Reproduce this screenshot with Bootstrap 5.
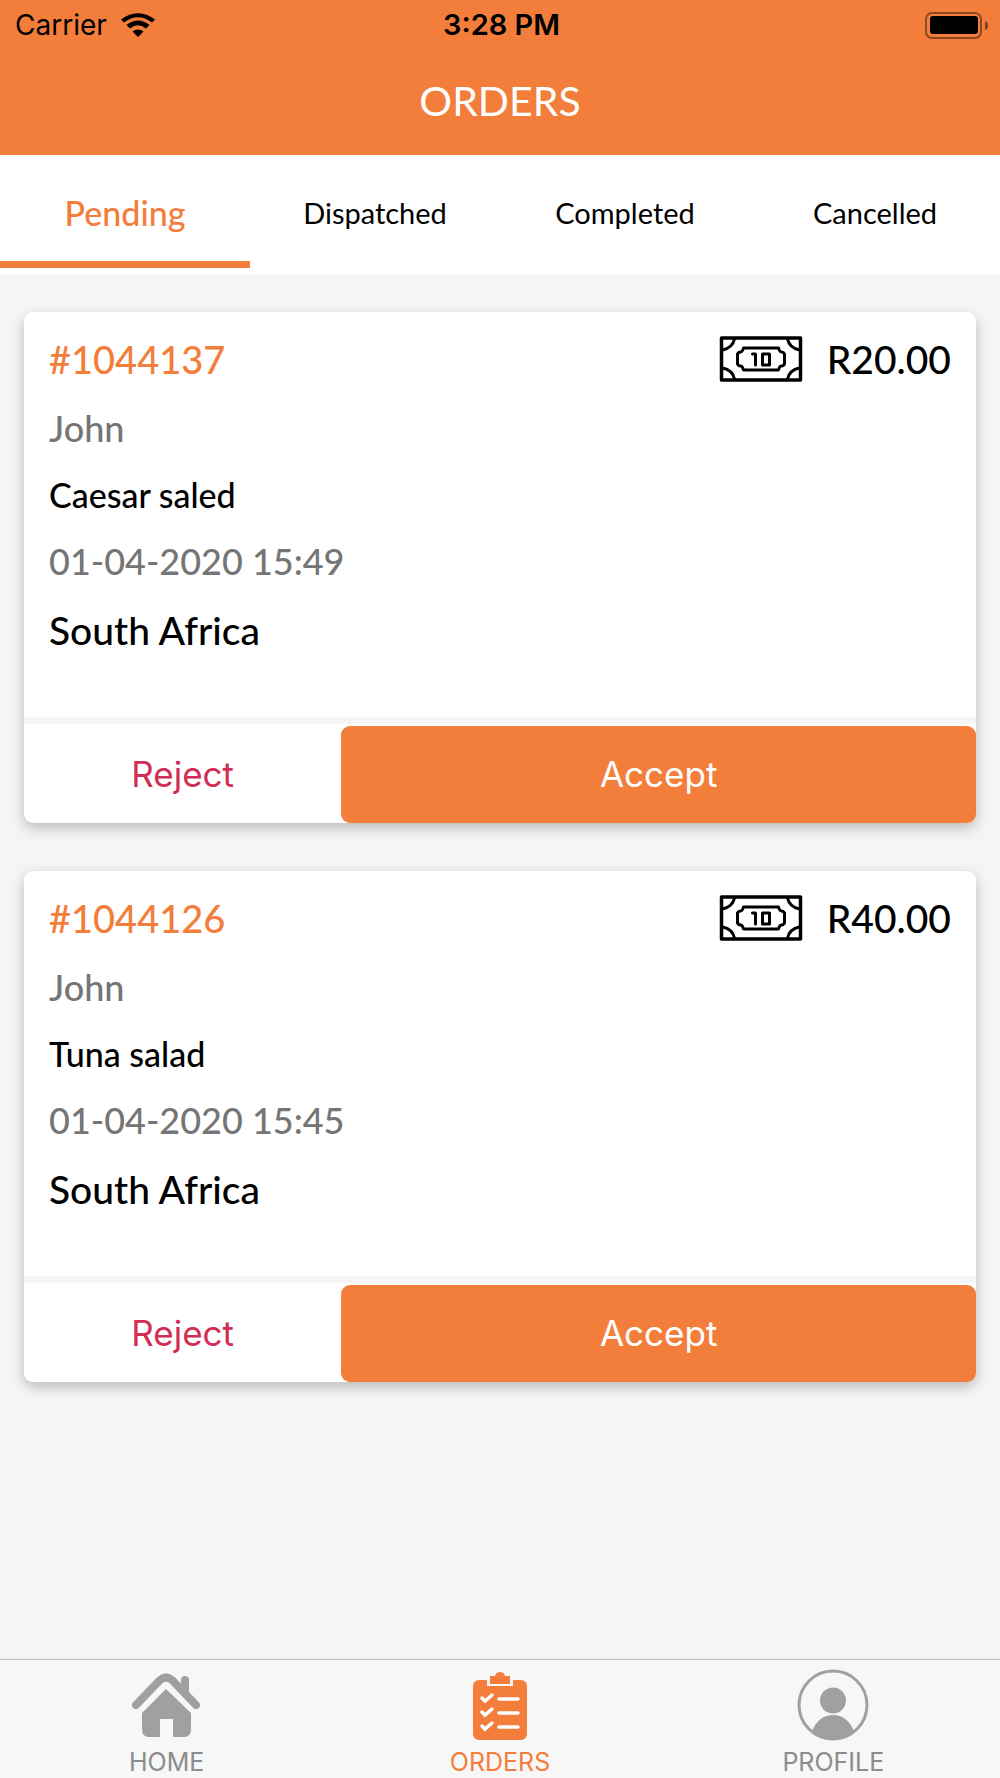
<!DOCTYPE html>
<html lang="en">
<head>
<meta charset="utf-8">
<meta name="viewport" content="width=device-width, initial-scale=1">
<title>Orders</title>
<link href="https://cdn.jsdelivr.net/npm/bootstrap@5.3.0/dist/css/bootstrap.min.css" rel="stylesheet">
<style>
:root { --brand: #f37e3b; --reject: #d12d55; --canvas: #f5f5f5; --muted: #757575; }
body { font-family: Lato, sans-serif; background: var(--canvas); color: #000; line-height: 1.2; }
.app-header { background: var(--brand); height: 155px; }
.status-bar { font-family: Inter, sans-serif; font-size: 28px; line-height: 34px; padding: 8px 12px 0 15px; }
.status-bar > * { flex: 1 1 0; }
.status-carrier { gap: 14px; }
.status-time { font-size: 29px; }
.app-title { font-size: 41px; line-height: 50px; padding-top: 34px; color: #fff; font-weight: 400; }
.status-tabs .nav-link { height: 120px; padding: 0 0 3px; font-size: 29px; color: #000; border-radius: 0; display: flex; align-items: center; justify-content: center; }
.status-tabs .nav-link.active { height: 113px; padding: 10px 0 0; font-size: 34px; font-weight: 500; color: var(--brand); border-bottom: 7px solid var(--brand); }
.order-list { padding: 37px 24px 48px; gap: 48px; }
.order-card { border: 0; border-radius: 9px; box-shadow: 0 5px 14px rgba(0,0,0,.24); color: #000; }
.order-body { padding: 24px 25px 63px; gap: 23px; font-weight: 500; }
.order-top { font-size: 39px; line-height: 47px; }
.order-id { font-size: 38px; font-weight: 500; line-height: 47px; color: var(--brand); }
.order-meta { font-size: 36px; line-height: 45px; color: var(--muted); }
.order-item { font-size: 34px; line-height: 42px; }
.order-place { font-size: 39px; line-height: 47px; }
.order-actions { border-top: 7px solid var(--canvas); padding-top: 2px; }
.order-actions .btn { height: 97px; border: 0; border-radius: 9px; font-family: Inter, sans-serif; font-size: 35px; padding: 0; }
.btn-reject { flex: 1 1 0; color: var(--reject); }
.btn-accept, .btn-accept:hover { flex: 2 1 0; color: #fff; background: var(--brand); }
.tab-bar { background: #f7f7f7; border-top: 1px solid #bdbdbd; height: 119px; font-family: Inter, sans-serif; font-size: 25px; line-height: 30px; font-weight: 400; }
.tab-bar a { color: #8c8c8c; text-decoration: none; padding-top: 9px; }
.tab-bar a.current { color: var(--brand); }
.tab-bar svg { margin-bottom: 6px; }
</style>
</head>
<body class="min-vh-100 d-flex flex-column">
<header class="app-header">
  <div class="status-bar d-flex align-items-center">
    <div class="status-carrier d-flex align-items-center"><span>Carrier</span>
      <svg width="34" height="25" viewBox="0 0 34 25" aria-hidden="true"><path d="M0 6.500Q17-6 34 6.500L31 9.500Q17-1 3 9.500ZM5.500 12Q17 3 28.500 12L25 15.500Q17 9 9 15.500ZM11.500 18.500Q17 14.500 22.500 18.500L17 24Z"/></svg>
    </div>
    <div class="status-time text-center fw-semibold">3:28 PM</div>
    <div class="d-flex justify-content-end">
      <svg width="63" height="27" viewBox="0 0 63 27" aria-hidden="true"><rect x="1" y="1" width="55" height="25" rx="6" fill="none" stroke="#000" stroke-opacity=".42" stroke-width="2"/><rect x="5" y="4" width="48" height="18" rx="3"/><path d="M60 9Q63 10 63 13.500T60 18Z" fill-opacity=".5"/></svg>
    </div>
  </div>
  <h1 class="app-title text-center m-0">ORDERS</h1>
</header>
<nav class="status-tabs nav nav-fill bg-white row g-0" aria-label="Order status">
  <a class="nav-link active col-3" aria-current="page" href="#">Pending</a>
  <a class="nav-link col-3" href="#">Dispatched</a>
  <a class="nav-link col-3" href="#">Completed</a>
  <a class="nav-link col-3" href="#">Cancelled</a>
</nav>
<svg class="d-none" aria-hidden="true">
  <symbol id="banknote" viewBox="0 0 83 46">
    <g fill="none" stroke="#000" stroke-width="3" stroke-linejoin="round" stroke-linecap="round">
      <rect x="2" y="2" width="79" height="42" stroke-width="3.500"/>
      <path d="M15 3Q13 12 3 14M68 3Q70 12 80 14M3 32Q13 34 15 43M80 32Q70 34 68 43"/>
      <path d="M24 12H59Q60 16 62 16Q64 16 65 18V28Q64 30 62 30Q60 30 59 34H24Q23 30 21 30Q19 30 18 28V18Q19 16 21 16Q23 16 24 12Z"/>
      <path d="M33 18H36V29M43 18H50V29H43Z"/>
    </g>
  </symbol>
</svg>
<main class="order-list d-flex flex-column flex-grow-1">
  <article class="order-card card">
    <div class="order-body d-flex flex-column">
      <div class="order-top d-flex justify-content-between">
        <h2 class="order-id m-0">#1044137</h2>
        <div class="d-flex align-items-start"><svg class="me-4" width="84" height="46" role="img" aria-label="Cash"><use href="#banknote"/></svg><span>R20.00</span></div>
      </div>
      <div class="order-meta">John</div>
      <div class="order-item">Caesar saled</div>
      <time class="order-meta" datetime="2020-04-01T15:49">01-04-2020 15:49</time>
      <div class="order-place">South Africa</div>
    </div>
    <div class="order-actions d-flex"><button type="button" class="btn btn-reject">Reject</button><button type="button" class="btn btn-accept">Accept</button></div>
  </article>
  <article class="order-card card">
    <div class="order-body d-flex flex-column">
      <div class="order-top d-flex justify-content-between">
        <h2 class="order-id m-0">#1044126</h2>
        <div class="d-flex align-items-start"><svg class="me-4" width="84" height="46" role="img" aria-label="Cash"><use href="#banknote"/></svg><span>R40.00</span></div>
      </div>
      <div class="order-meta">John</div>
      <div class="order-item">Tuna salad</div>
      <time class="order-meta" datetime="2020-04-01T15:45">01-04-2020 15:45</time>
      <div class="order-place">South Africa</div>
    </div>
    <div class="order-actions d-flex"><button type="button" class="btn btn-reject">Reject</button><button type="button" class="btn btn-accept">Accept</button></div>
  </article>
</main>
<nav class="tab-bar row g-0 sticky-bottom" aria-label="Main">
  <a class="col-4 d-flex flex-column align-items-center" href="#">
    <svg width="72" height="72" viewBox="1 0 72 72" fill="#a0a0a0" aria-hidden="true">
      <path d="M6 36L30 11Q36 6 42 11L66 36" fill="none" stroke="#a0a0a0" stroke-width="8" stroke-linecap="round" stroke-linejoin="round"/>
      <path d="M51 11Q51 7 55 7T59 11V28L51 20Z"/>
      <path d="M36 20L61 44V60Q61 68 54 68H43V50H30V68H19Q12 68 12 60V44Z"/>
    </svg>
    <span>HOME</span>
  </a>
  <a class="col-4 d-flex flex-column align-items-center current" aria-current="page" href="#">
    <svg width="72" height="72" viewBox="0 0 72 72" aria-hidden="true">
      <rect x="9" y="11" width="54" height="60" rx="6" fill="#f37e3b"/>
      <path d="M23 7V17H49V7" fill="#f7f7f7"/>
      <path d="M26 7H31Q32 3 36 3T41 7H46V15H26Z" fill="#f37e3b"/>
      <g fill="none" stroke="#fff" stroke-width="3.500" stroke-linecap="round"><path d="M35 30H54M35 44H54M35 58H54"/><path d="M18 29L21 32L28 26M18 43L21 46L28 40M18 57L21 60L28 54"/></g>
    </svg>
    <span>ORDERS</span>
  </a>
  <a class="col-4 d-flex flex-column align-items-center" href="#">
    <svg width="72" height="72" viewBox="0 0 72 72" aria-hidden="true"><circle cx="36" cy="36" r="34" fill="none" stroke="#a0a0a0" stroke-width="3"/><circle cx="36" cy="31.500" r="13" fill="#a0a0a0"/><path d="M15 62Q22 46 36 46T57 62Q36 80 15 62Z" fill="#a0a0a0"/></svg>
    <span>PROFILE</span>
  </a>
</nav>
<script src="https://cdn.jsdelivr.net/npm/bootstrap@5.3.0/dist/js/bootstrap.bundle.min.js"></script>
</body>
</html>
